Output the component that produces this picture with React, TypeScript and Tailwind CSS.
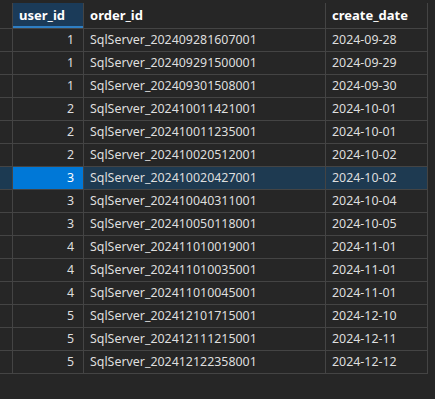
const rows: [number, string, string][] = [
  [1, 'SqlServer_202409281607001', '2024-09-28'],
  [1, 'SqlServer_202409291500001', '2024-09-29'],
  [1, 'SqlServer_202409301508001', '2024-09-30'],
  [2, 'SqlServer_202410011421001', '2024-10-01'],
  [2, 'SqlServer_202410011235001', '2024-10-01'],
  [2, 'SqlServer_202410020512001', '2024-10-02'],
  [3, 'SqlServer_202410020427001', '2024-10-02'],
  [3, 'SqlServer_202410040311001', '2024-10-04'],
  [3, 'SqlServer_202410050118001', '2024-10-05'],
  [4, 'SqlServer_202411010019001', '2024-11-01'],
  [4, 'SqlServer_202411010035001', '2024-11-01'],
  [4, 'SqlServer_202411010045001', '2024-11-01'],
  [5, 'SqlServer_202412101715001', '2024-12-10'],
  [5, 'SqlServer_202412111215001', '2024-12-11'],
  [5, 'SqlServer_202412122358001', '2024-12-12'],
];

const SELECTED = 6;

export default function App() {
  return (
    <div className="w-[435px] h-[399px] bg-[#262626] pt-[3px] text-[12.4px] text-[#dedede] font-['Noto_Sans','Open_Sans',sans-serif] overflow-hidden">
      <div className="grid grid-cols-[13px_71px_242px_102px] w-[428px]">
        {/* header */}
        <div className="h-[26px] border-r border-b border-[#444]" />
        <div className="h-[26px] border-r border-b border-[#444] bg-[#1b3b59] relative flex items-center pl-[6px] text-[13px] font-bold text-white">
          user_id
          <div className="absolute left-0 right-0 bottom-0 h-[2px] bg-[#2f7fc4]" />
        </div>
        <div className="h-[26px] border-r border-b border-[#444] flex items-center pl-[6px] text-[13px] font-bold text-white">
          order_id
        </div>
        <div className="h-[26px] border-r border-b border-[#444] flex items-center pl-[6px] text-[13px] font-bold text-white">
          create_date
        </div>

        {rows.map(([uid, oid, date], i) => {
          const sel = i === SELECTED;
          return (
            <div key={i} className="contents">
              <div className={`h-[23px] border-r border-b border-[#444] ${sel ? 'bg-[#1c3a52]' : ''}`} />
              <div className={`h-[23px] border-r border-b border-[#444] flex items-center justify-end pr-[9px] ${sel ? 'bg-[#0078d7] text-white' : ''}`}>
                {uid}
              </div>
              <div className={`h-[23px] border-r border-b border-[#444] flex items-center pl-[6px] ${sel ? 'bg-[#1e3a51]' : ''}`}>
                {oid}
              </div>
              <div className={`h-[23px] border-r border-b border-[#444] flex items-center pl-[6px] ${sel ? 'bg-[#1e3a51]' : ''}`}>
                {date}
              </div>
            </div>
          );
        })}
      </div>
    </div>
  );
}
